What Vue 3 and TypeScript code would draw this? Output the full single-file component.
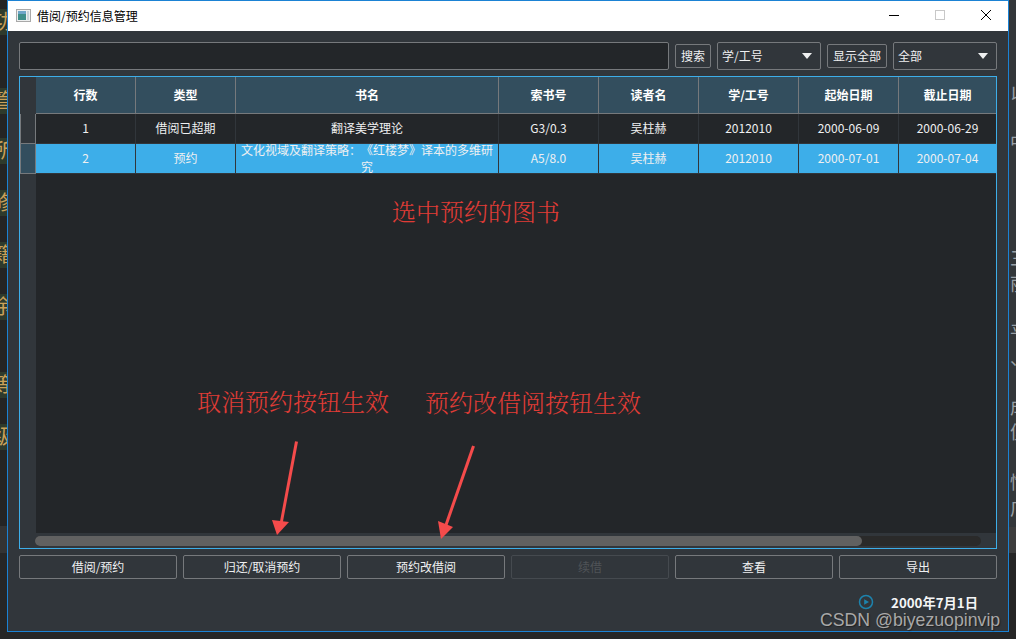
<script setup lang="ts">
const headers = ['行数', '类型', '书名', '索书号', '读者名', '学/工号', '起始日期', '截止日期']
const rows = [
  { cells: ['1', '借阅已超期', '翻译美学理论', 'G3/0.3', '吴柱赫', '2012010', '2000-06-09', '2000-06-29'], selected: false },
  { cells: ['2', '预约', '文化视域及翻译策略：《红楼梦》译本的多维研究', 'A5/8.0', '吴柱赫', '2012010', '2000-07-01', '2000-07-04'], selected: true },
]
const actions = [
  { label: '借阅/预约', disabled: false },
  { label: '归还/取消预约', disabled: false },
  { label: '预约改借阅', disabled: false },
  { label: '续借', disabled: true },
  { label: '查看', disabled: false },
  { label: '导出', disabled: false },
]
const leftGlyphs = [
  { ch: '功', top: 9 }, { ch: '管', top: 88 }, { ch: '所', top: 138 }, { ch: '修', top: 190 },
  { ch: '籍', top: 242 }, { ch: '余', top: 294 }, { ch: '等', top: 372 }, { ch: '级', top: 424 },
]
const rightGlyphs = [
  { ch: '以', top: 82 }, { ch: '中', top: 130 }, { ch: '三', top: 246 }, { ch: '丽', top: 272 },
  { ch: '平', top: 320 }, { ch: '、', top: 346 }, { ch: '成', top: 395 }, { ch: '便', top: 420 },
  { ch: '情', top: 470 }, { ch: '广', top: 496 },
]
</script>

<template>
  <div class="desktop">
    <div class="strip strip-left">
      <span v-for="g in leftGlyphs" :key="g.top" class="glyph" :style="{ top: g.top + 'px' }">{{ g.ch }}</span>
    </div>
    <div class="window">
      <div class="titlebar">
        <svg class="app-icon" width="15" height="13" viewBox="0 0 15 13">
          <rect x="0.5" y="0.5" width="14" height="12" fill="#eef0f0" stroke="#a9a9a9" />
          <rect x="2" y="2" width="8" height="9" fill="#3f8f8a" />
          <rect x="2" y="2" width="8" height="3" fill="#6fa6c8" />
          <rect x="11" y="2" width="2" height="9" fill="#c9d4d8" />
        </svg>
        <span class="title">借阅/预约信息管理</span>
        <div class="win-controls">
          <svg width="12" height="12" viewBox="0 0 12 12"><path d="M1 6.500h10" stroke="#000" stroke-width="1" /></svg>
          <svg width="12" height="12" viewBox="0 0 12 12"><rect x="1.500" y="1.500" width="9" height="9" fill="none" stroke="#c8c8c8" /></svg>
          <svg width="12" height="12" viewBox="0 0 12 12"><path d="M1 1l10 10M11 1L1 11" stroke="#000" stroke-width="1" /></svg>
        </div>
      </div>
      <div class="content">
        <div class="toolbar">
          <div class="search-input"></div>
          <button class="btn small">搜索</button>
          <div class="combo wide"><span>学/工号</span><i class="caret"></i></div>
          <button class="btn small">显示全部</button>
          <div class="combo wide"><span>全部</span><i class="caret"></i></div>
        </div>

        <div class="table-frame">
          <div class="grid-row head">
            <div class="corner"></div>
            <div v-for="h in headers" :key="h" class="hcell"><span>{{ h }}</span></div>
          </div>
          <div v-for="r in rows" :key="r.cells[0]" class="grid-row body-row" :class="{ selected: r.selected }">
            <div class="row-head"></div>
            <div v-for="(c, i) in r.cells" :key="i" class="cell"><span>{{ c }}</span></div>
          </div>
          <div class="filler"><div class="filler-head"></div><div class="filler-body"></div></div>
          <div class="hscroll">
            <div class="hscroll-track"><div class="hscroll-thumb"></div></div>
          </div>
        </div>

        <div class="actions">
          <button v-for="a in actions" :key="a.label" class="btn action" :disabled="a.disabled">{{ a.label }}</button>
        </div>

        <div class="status">
          <svg class="play" width="16" height="16" viewBox="0 0 16 16">
            <circle cx="8" cy="8" r="6.500" fill="none" stroke="#1d83ad" stroke-width="1.500" />
            <path d="M6.200 5.200v5.600L11 8z" fill="#1d83ad" />
          </svg>
          <span class="date">2000年7月1日</span>
        </div>
      </div>
    </div>
    <div class="strip strip-right">
      <span v-for="g in rightGlyphs" :key="g.top" class="glyph" :style="{ top: g.top + 'px' }">{{ g.ch }}</span>
    </div>

    <div class="note note-a">选中预约的图书</div>
    <div class="note note-b">取消预约按钮生效</div>
    <div class="note note-c">预约改借阅按钮生效</div>
    <svg class="arrows" width="1016" height="639" viewBox="0 0 1016 639">
      <path d="M296.500 441.500 L281 524" stroke="#f54b4b" stroke-width="3" fill="none" />
      <path d="M277 535 L272 520 L289 522z" fill="#f54b4b" />
      <path d="M473.500 446 L446 525" stroke="#f54b4b" stroke-width="3" fill="none" />
      <path d="M441 539 L438 521 L453 527z" fill="#f54b4b" />
    </svg>
    <div class="watermark">CSDN @biyezuopinvip</div>
  </div>
</template>

<style>
html, body { margin: 0; background: #262626; }
</style>

<style scoped>
.desktop {
  position: relative;
  width: 1016px;
  height: 639px;
  overflow: hidden;
  display: flex;
  align-items: flex-start;
  background: #262626;
  font-family: "Noto Sans CJK SC", "Liberation Sans", sans-serif;
  font-size: 12px;
  color: #eff0f1;
  text-spacing-trim: space-all;
}
.strip {
  position: relative;
  height: 553px;
  overflow: hidden;
  flex: none;
  width: 7px;
}
.strip-left { background: linear-gradient(#242424 0 526px, #333333 526px); }
.strip-right { background: linear-gradient(#33373a 0 527px, #3d3d3d 527px); }
.glyph {
  position: absolute;
  font-size: 20px;
  line-height: 23px;
  padding-bottom: 3px;
  white-space: nowrap;
}
.strip-left .glyph { right: -6px; color: #c9a15a; background: #2e3a2c; padding-left: 6px; }
.strip-right .glyph { left: 1px; color: #9aa0a6; font-size: 18px; }

.window {
  flex: none;
  width: 1002px;
  height: 632px;
  box-sizing: border-box;
  border: 1px solid #1b82d4;
  background: #31363b;
  display: flex;
  flex-direction: column;
}
.titlebar {
  height: 30px;
  flex: none;
  background: #fff;
  color: #000;
  display: flex;
  align-items: center;
  padding-left: 8px;
  gap: 6px;
}
.app-icon { flex: none; margin-bottom: 2px; }
.title { font-size: 12px; padding-bottom: 2px; }
.win-controls {
  margin-left: auto;
  display: flex;
  gap: 34px;
  padding: 0 16px 2px 0;
}
.content {
  flex: 1;
  padding: 11px 11px 0;
  display: flex;
  flex-direction: column;
  gap: 6px;
}
.toolbar {
  display: flex;
  align-items: center;
  gap: 6px;
  height: 28px;
}
.search-input {
  width: 650px;
  height: 28px;
  box-sizing: border-box;
  background: #232629;
  border: 1px solid #76797c;
  border-radius: 2px;
}
.btn {
  font: inherit;
  color: #eff0f1;
  background: #31363b;
  border: 1px solid #76797c;
  border-radius: 2px;
  padding: 0 0 2px;
  box-sizing: border-box;
  height: 24px;
}
.btn.small { padding: 0 5px 2px; flex: none; }
.btn:disabled { color: #4f5357; border-color: #454a4f; }
.combo {
  width: 104px;
  height: 28px;
  box-sizing: border-box;
  background: #31363b;
  border: 1px solid #76797c;
  border-radius: 2px;
  display: flex;
  align-items: center;
  justify-content: space-between;
  padding: 0 8px 2px 4px;
}
.caret {
  width: 0;
  height: 0;
  border-left: 5.500px solid transparent;
  border-right: 5.500px solid transparent;
  border-top: 6px solid #eff0f1;
  margin-top: 2px;
}
.table-frame {
  height: 473px;
  box-sizing: border-box;
  border: 1px solid #3daee9;
  background: #232629;
  display: flex;
  flex-direction: column;
}
.grid-row {
  display: grid;
  grid-template-columns: 16px 100px 100px 263px 100px 100px 100px 100px 1fr;
}
.head { height: 37px; flex: none; background: #31363b; }
.hcell {
  background: #334e5e;
  border-right: 1px solid #76797c;
  border-bottom: 1px solid #76797c;
  display: flex;
  align-items: center;
  justify-content: center;
  font-weight: 700;
  color: #fff;
  padding-bottom: 2px;
}
.hcell:last-child { border-right: 0; }
.body-row { height: 30px; flex: none; }
.row-head {
  background: #31363b;
  border: 1px solid #76797c;
  border-top-width: 0;
  box-sizing: border-box;
}
.selected .row-head { background: #334e5e; border-bottom-width: 1px; }
.cell {
  box-sizing: border-box;
  border-right: 1px solid #31363b;
  border-bottom: 1px solid #31363b;
  display: flex;
  align-items: center;
  justify-content: center;
  text-align: center;
  line-height: 17px;
  overflow: hidden;
  color: #eff0f1;
  padding-bottom: 2px;
}
.cell:last-child { border-right: 0; }
.selected .cell { background: #3daee9; }
.filler { flex: 1; display: flex; }
.filler-head { width: 16px; background: #31363b; flex: none; }
.filler-body { flex: 1; background: #232629; }
.hscroll {
  height: 15px;
  flex: none;
  background: #31363b;
  padding: 3px 15px 2px;
  box-sizing: border-box;
}
.hscroll-track {
  height: 10px;
  background: #2a2a2a;
  border-radius: 5px;
}
.hscroll-thumb {
  width: 827px;
  height: 10px;
  background: #616161;
  border-radius: 5px;
}
.actions {
  display: grid;
  grid-template-columns: repeat(6, 158px);
  gap: 6px;
}
.status {
  display: flex;
  align-items: center;
  justify-content: flex-end;
  margin-top: 5px;
  height: 26px;
  padding-right: 19px;
}
.play { margin-right: 17px; margin-bottom: 2px; }
.date { font-weight: 700; font-size: 13.300px; color: #f4f5f6; padding-bottom: 1px; }
.note {
  position: absolute;
  font-family: "Noto Serif CJK SC", "Noto Sans CJK SC", serif;
  font-weight: 300;
  font-size: 24px;
  line-height: 30px;
  color: #e03c36;
  white-space: nowrap;
}
.note-a { left: 392px; top: 196px; }
.note-b { left: 197px; top: 386px; }
.note-c { left: 425px; top: 387px; }
.arrows { position: absolute; left: 0; top: 0; pointer-events: none; }
.watermark {
  position: absolute;
  left: 820px;
  top: 609px;
  font-family: "Liberation Sans", sans-serif;
  font-size: 17.700px;
  line-height: 22px;
  color: #a8a8a8;
  text-shadow: 1px 1px 1px #222;
  white-space: nowrap;
}
</style>
